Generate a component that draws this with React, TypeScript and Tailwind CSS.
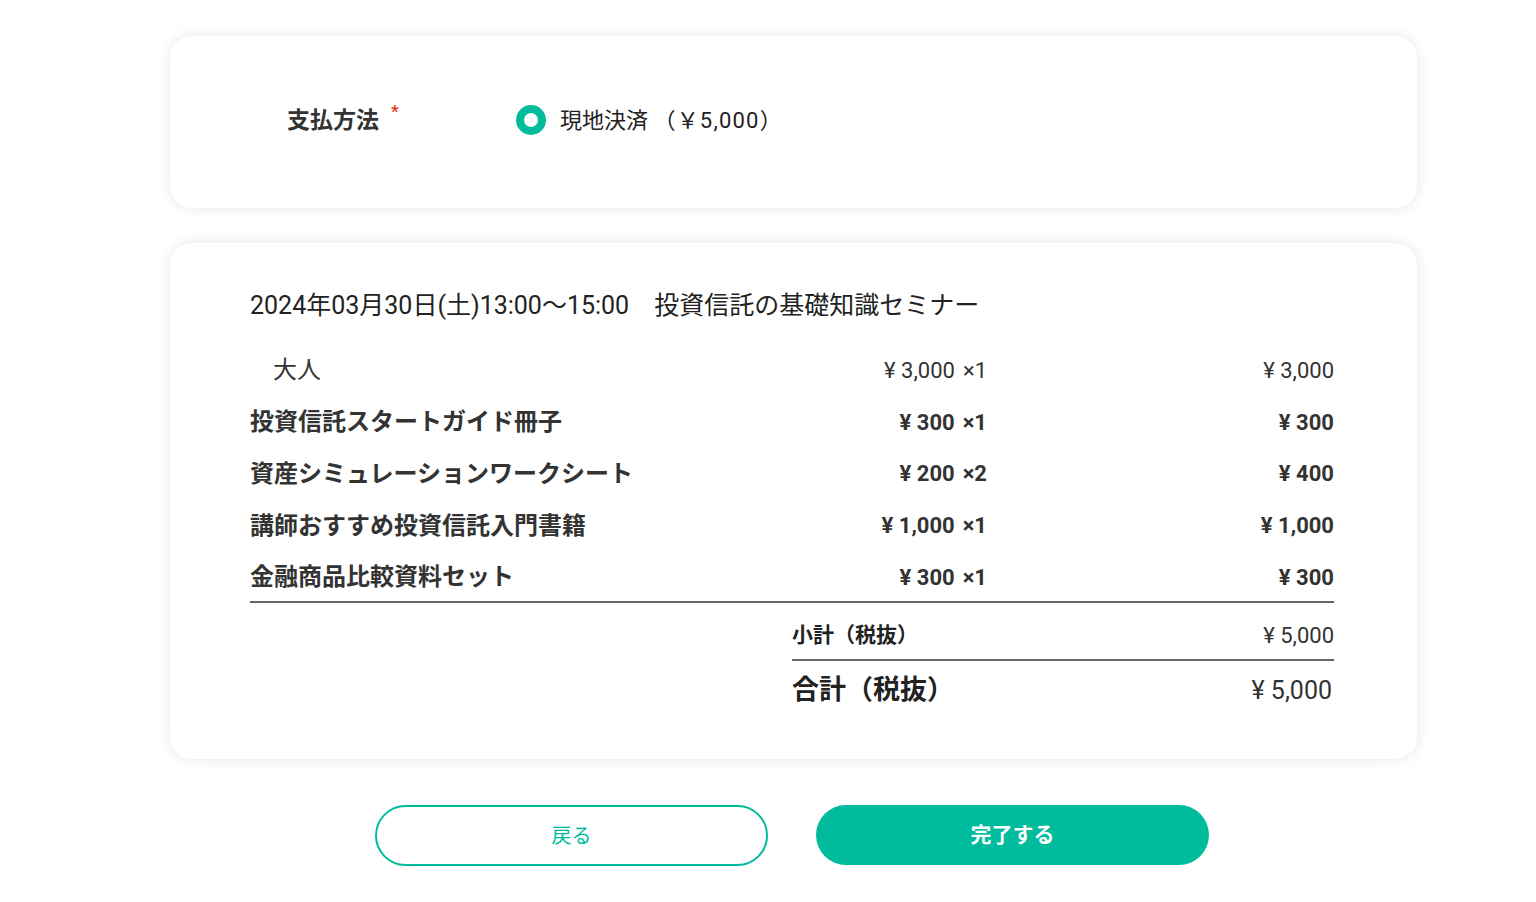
import type { ReactNode } from "react";

const TEAL = "#00bc9c";

const items = [
  { name: "投資信託スタートガイド冊子", price: "¥ 300", qty: "×1", total: "¥ 300" },
  { name: "資産シミュレーションワークシート", price: "¥ 200", qty: "×2", total: "¥ 400" },
  { name: "講師おすすめ投資信託入門書籍", price: "¥ 1,000", qty: "×1", total: "¥ 1,000" },
  { name: "金融商品比較資料セット", price: "¥ 300", qty: "×1", total: "¥ 300" },
];

function Card({ children, className = "" }: { children: ReactNode; className?: string }) {
  return (
    <div
      className={`rounded-[22px] bg-white shadow-[0_0_14px_rgba(0,0,0,0.10)] ${className}`}
    >
      {children}
    </div>
  );
}

function Row({
  name,
  price,
  qty,
  total,
  bold,
  indent,
}: {
  name: string;
  price: string;
  qty: string;
  total: string;
  bold?: boolean;
  indent?: boolean;
}) {
  return (
    <div
      className={`grid h-[51.75px] grid-cols-[737px_1fr] items-center text-[#333] ${
        bold ? "font-bold" : "font-normal"
      }`}
    >
      <div className="flex items-center justify-between">
        <span className={`text-[24px] ${indent ? "pl-[23px]" : ""}`}>{name}</span>
        <span className="flex items-baseline gap-[8px] text-[22px]">
          <span>{price}</span>
          <span>{qty}</span>
        </span>
      </div>
      <div className="text-right text-[22px]">{total}</div>
    </div>
  );
}

export default function App() {
  return (
    <div
      className="min-h-[902px] bg-white pt-[36px]"
      style={{ fontFamily: 'Roboto, "Noto Sans CJK JP", sans-serif' }}
    >
      <div className="ml-[170px] w-[1247px]">
        <Card className="flex h-[172px] items-center pb-[4px] pl-[117px]">
          <div className="flex w-[229px] items-start pt-[2px] text-[23px] font-bold text-[#333]">
            支払方法
            <span className="ml-[12px] mt-[-5px] text-[17px] text-[#d9381e]">*</span>
          </div>
          <label className="flex items-center gap-[14px] text-[22px] text-[#222]">
            <span
              className="h-[30px] w-[30px] rounded-full border-[8px] bg-white"
              style={{ borderColor: TEAL }}
            />
            <span>
              現地決済 <span className="tracking-[1.2px]">（￥5,000）</span>
            </span>
          </label>
        </Card>

        <Card className="mt-[35px] pb-[40px] pl-[80px] pr-[83px] pt-[44px]">
          <div className="text-[25px] text-[#222]">
            2024年03月30日(土)13:00〜15:00　投資信託の基礎知識セミナー
          </div>
          <div className="mt-[20px]">
            <Row name="大人" price="¥ 3,000" qty="×1" total="¥ 3,000" indent />
            {items.map((it) => (
              <Row key={it.name} {...it} bold />
            ))}
          </div>
          <div className="mt-[-2px] border-t-2 border-[#666]" />
          <div className="ml-[542px]">
            <div className="flex h-[56px] items-center justify-between pt-[8px] text-[#222]">
              <span className="text-[21px] font-bold">小計（税抜）</span>
              <span className="text-[22px] text-[#333]">¥ 5,000</span>
            </div>
            <div className="border-t-2 border-[#666]" />
            <div className="flex h-[58px] items-center justify-between text-[#222]">
              <span className="text-[27px] font-bold">合計（税抜）</span>
              <span className="pr-[2px] text-[25px] text-[#333]">¥ 5,000</span>
            </div>
          </div>
        </Card>

        <div className="mt-[46px] flex justify-center gap-[48px] pr-[3px]">
          <button
            className="h-[61px] w-[393px] rounded-full border-2 bg-white text-[20px]"
            style={{ borderColor: TEAL, color: TEAL }}
          >
            戻る
          </button>
          <button
            className="h-[60px] w-[393px] rounded-full text-[21px] font-bold text-white"
            style={{ backgroundColor: TEAL }}
          >
            完了する
          </button>
        </div>
      </div>
    </div>
  );
}
